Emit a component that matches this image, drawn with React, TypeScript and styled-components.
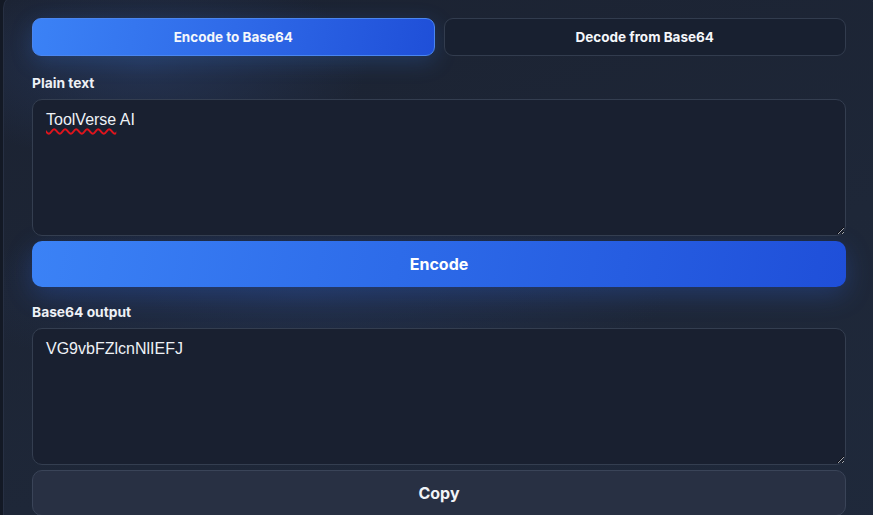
import React, { useState } from "react";
import styled, { createGlobalStyle } from "styled-components";

const GlobalStyle = createGlobalStyle`
    html, body {
        margin: 0;
        padding: 0;
        background: #131925;
        overflow: hidden;
    }
    * {
        box-sizing: border-box;
    }
`;

const Base64Tool: React.FC = () => {
    const [mode, setMode] = useState<"encode" | "decode">("encode");
    const [input, setInput] = useState("ToolVerse AI");
    const output = "VG9vbFZlcnNlIEFJ";

    return (
        <_Page>
            <GlobalStyle />
            <_Card>
                <_Tabs>
                    <_Tab $active={mode === "encode"} onClick={() => setMode("encode")}>
                        Encode to Base64
                    </_Tab>
                    <_Tab $active={mode === "decode"} onClick={() => setMode("decode")}>
                        Decode from Base64
                    </_Tab>
                </_Tabs>

                <_Label>Plain text</_Label>
                <_Field>
                    <_TextArea
                        value={input}
                        spellCheck={false}
                        onChange={(e) => setInput(e.target.value)}
                    />
                    {/* spellcheck squiggle under the product name */}
                    <_Squiggle>ToolVerse</_Squiggle>
                </_Field>
                <_PrimaryButton>Encode</_PrimaryButton>

                <_Label $spaced>Base64 output</_Label>
                <_Field>
                    <_TextArea value={output} readOnly spellCheck={false} />
                </_Field>
                <_SecondaryButton>Copy</_SecondaryButton>
            </_Card>
        </_Page>
    );
};

export default Base64Tool;

const _Page = styled.div`
    width: 873px;
    height: 515px;
    overflow: hidden;
    padding-left: 3px;
    font-family: Inter, "Liberation Sans", sans-serif;
`;

const _Card = styled.div`
    width: 872px;
    height: 560px;
    margin-top: -6px;
    padding: 23px 28px 0 28px;
    border: 1px solid #273043;
    border-radius: 14px;
    background:
        radial-gradient(ellipse 320px 140px at 140px 70px, rgba(42, 62, 105, 0.55), transparent 70%),
        radial-gradient(ellipse 520px 120px at 300px 300px, rgba(38, 58, 100, 0.45), transparent 70%),
        linear-gradient(160deg, #1b2231 0%, #1e2738 60%, #1f293b 100%);
    display: flex;
    flex-direction: column;
`;

const _Tabs = styled.div`
    display: grid;
    grid-template-columns: 1fr 1fr;
    gap: 9px;
`;

const _Tab = styled.button<{ $active?: boolean }>`
    height: 38px;
    border-radius: 9px;
    border: 1px solid ${(p) => (p.$active ? "#4a86f0" : "#323c4e")};
    background: ${(p) =>
        p.$active ? "linear-gradient(100deg, #3b82f6 0%, #2f6ae8 50%, #1f4fd8 100%)" : "#182030"};
    box-shadow: ${(p) => (p.$active ? "0 6px 22px rgba(59, 130, 246, 0.22)" : "none")};
    color: #f5f7fb;
    font-family: Inter, "Liberation Sans", sans-serif;
    font-size: 13.5px;
    font-weight: 700;
    cursor: pointer;
`;

const _Label = styled.div<{ $spaced?: boolean }>`
    margin-top: ${(p) => (p.$spaced ? "17px" : "19px")};
    margin-bottom: 8px;
    font-size: 13.8px;
    line-height: 16px;
    font-weight: 700;
    color: #eef1f6;
`;

const _Field = styled.div`
    position: relative;
    height: 137px;
    flex-shrink: 0;
`;

const _TextArea = styled.textarea`
    display: block;
    width: 100%;
    height: 137px;
    resize: vertical;
    padding: 10px 13px;
    border: 1px solid #343e50;
    border-radius: 10px;
    background: #192030;
    color: #eef1f6;
    font-family: "Liberation Sans", Arial, sans-serif;
    font-size: 16px;
    line-height: 20px;
    outline: none;
`;

const _Squiggle = styled.span`
    position: absolute;
    left: 14px;
    top: 11px;
    font-family: "Liberation Sans", Arial, sans-serif;
    font-size: 16px;
    line-height: 20px;
    color: transparent;
    text-decoration: underline wavy #e0141c;
    text-decoration-thickness: 1.5px;
    text-underline-offset: 3px;
    pointer-events: none;
`;

const _PrimaryButton = styled.button`
    flex-shrink: 0;
    margin-top: 5px;
    height: 46px;
    border: none;
    border-radius: 10px;
    background: linear-gradient(100deg, #3b82f6 0%, #2d6be9 45%, #1f4fd9 100%);
    box-shadow: 0 8px 26px rgba(45, 100, 220, 0.3);
    color: #ffffff;
    font-family: Inter, "Liberation Sans", sans-serif;
    font-size: 16px;
    font-weight: 700;
    cursor: pointer;
`;

const _SecondaryButton = styled.button`
    flex-shrink: 0;
    margin-top: 5px;
    height: 46px;
    border: 1px solid #3a4458;
    border-radius: 10px;
    background: #283043;
    color: #f1f3f7;
    font-family: Inter, "Liberation Sans", sans-serif;
    font-size: 16px;
    font-weight: 700;
    cursor: pointer;
`;
